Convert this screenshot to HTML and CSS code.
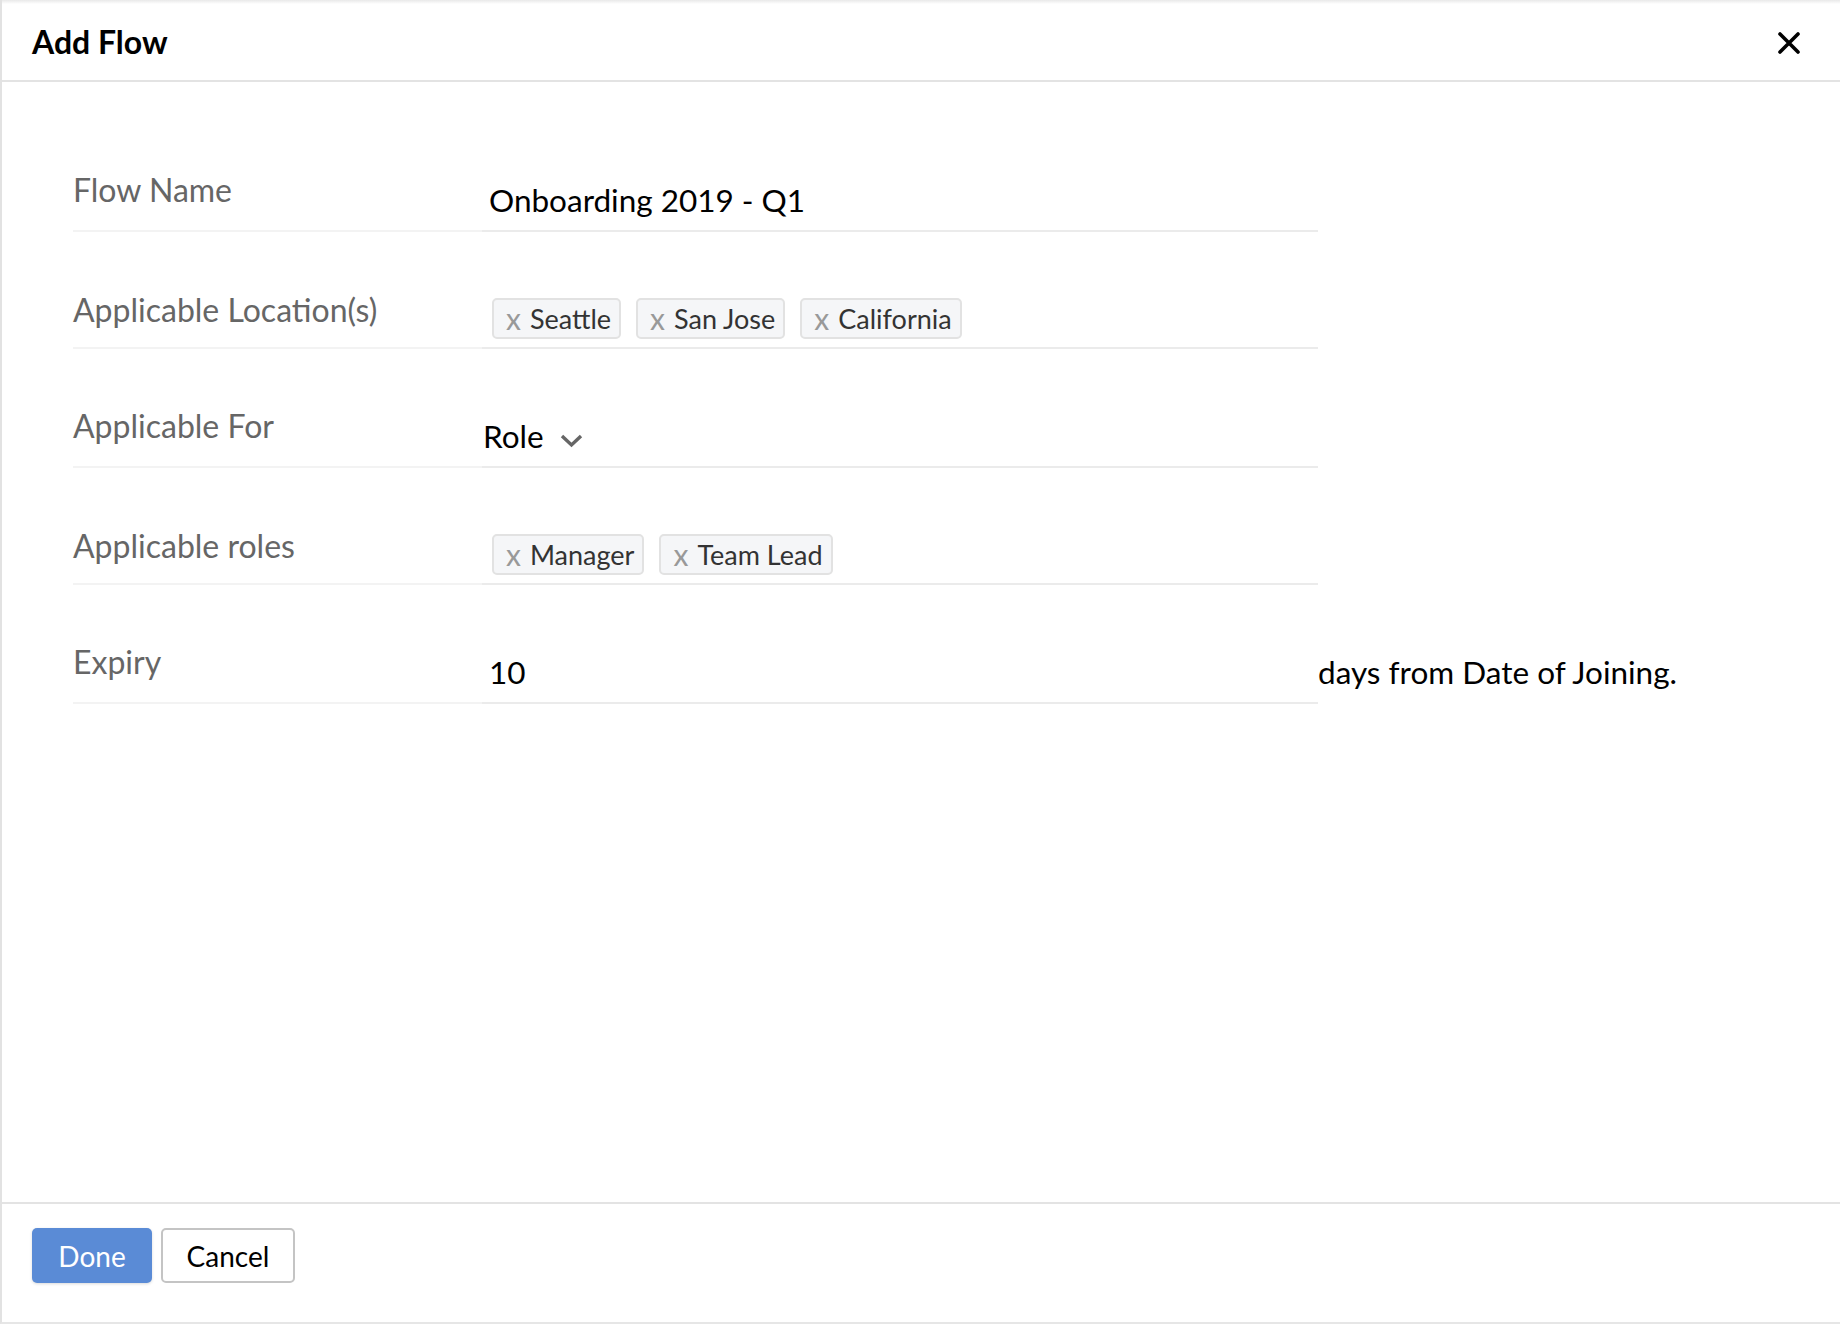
FILE: index.html
```html
<!DOCTYPE html>
<html lang="en">

<head>
    <meta charset="UTF-8" />
    <meta name="viewport" content="width=device-width, initial-scale=1.0" />
    <title>Add Flow</title>
    <link rel="stylesheet" href="styles.css">
</head>

<body>
    <div class="dialog">
        <div class="dialog-header">
            <h1 class="dialog-title">Add Flow</h1>
            <button class="close-btn" aria-label="Close">
                <svg width="22" height="22" viewBox="0 0 22 22">
                    <path d="M2 2 L20 20 M20 2 L2 20" stroke="#000" stroke-width="3.6" stroke-linecap="round" fill="none" />
                </svg>
            </button>
        </div>

        <div class="dialog-body">
            <div class="form-row">
                <div class="form-label">Flow Name</div>
                <div class="form-field field-text">Onboarding 2019 - Q1</div>
            </div>

            <div class="form-row row-chips">
                <div class="form-label">Applicable Location(s)</div>
                <div class="form-field field-chips">
                    <span class="chip"><span class="chip-x">x</span>Seattle</span>
                    <span class="chip"><span class="chip-x">x</span>San Jose</span>
                    <span class="chip"><span class="chip-x">x</span>California</span>
                </div>
            </div>

            <div class="form-row">
                <div class="form-label">Applicable For</div>
                <div class="form-field field-select">
                    <span>Role</span>
                    <svg class="chevron" width="23" height="15" viewBox="0 0 23 15">
                        <path d="M2 3 L11.5 12 L21 3" stroke="#666" stroke-width="3.4" fill="none" />
                    </svg>
                </div>
            </div>

            <div class="form-row row-chips">
                <div class="form-label">Applicable roles</div>
                <div class="form-field field-chips">
                    <span class="chip"><span class="chip-x">x</span>Manager</span>
                    <span class="chip"><span class="chip-x">x</span>Team Lead</span>
                </div>
            </div>

            <div class="form-row">
                <div class="form-label">Expiry</div>
                <div class="form-field field-text">10</div>
                <div class="field-suffix">days from Date of Joining.</div>
            </div>
        </div>

        <div class="dialog-footer">
            <button class="btn btn-primary">Done</button>
            <button class="btn btn-default">Cancel</button>
        </div>
    </div>
</body>

</html>
```

FILE: styles.css
```css
* {
    box-sizing: border-box;
}

html,
body {
    margin: 0;
    height: 100%;
}

body {
    font-family: Lato, "Open Sans", sans-serif;
    background: #fff;
    color: #000;
}

.dialog {
    height: 1324px;
    display: flex;
    flex-direction: column;
    border-left: 2px solid #e2e2e2;
    border-bottom: 2px solid #e6e6e6;
}

.dialog-header {
    height: 82px;
    display: flex;
    justify-content: space-between;
    align-items: center;
    padding: 4px 40px 0 30px;
    border-bottom: 2px solid #e3e3e3;
    background: linear-gradient(#e9e9e9, #fff 4px);
}

.dialog-title {
    margin: 0;
    font-size: 32px;
    line-height: 38px;
    font-weight: 700;
}

.close-btn {
    border: none;
    background: none;
    padding: 0;
    display: flex;
    margin-top: 2px;
}

.dialog-body {
    flex: 1;
    padding: 31px 0 0 71px;
}

.form-row {
    height: 119px;
    display: flex;
    align-items: flex-end;
}

.form-row.row-chips {
    height: 117px;
}

.form-label {
    width: 409px;
    font-size: 32px;
    line-height: 38px;
    color: #666;
    padding-bottom: 21px;
    border-bottom: 2px solid #f3f3f3;
}

.row-chips .form-label {
    padding-bottom: 18px;
}

.form-field {
    width: 836px;
    border-bottom: 2px solid #ebebeb;
}

.field-text {
    font-size: 31.5px;
    line-height: 38px;
    padding: 0 0 11px 7px;
}

.field-select {
    display: flex;
    align-items: center;
    font-size: 31.5px;
    line-height: 38px;
    padding: 0 0 11px 1px;
}

.chevron {
    margin-left: 16px;
    margin-top: 9px;
}

.field-chips {
    display: flex;
    gap: 15px;
    padding: 0 0 8px 10px;
}

.chip {
    display: inline-flex;
    align-items: center;
    height: 41px;
    padding: 0 8px 0 12px;
    border: 2px solid #e2e2e2;
    border-radius: 5px;
    background: #f5f6f8;
    font-size: 27px;
    color: #333;
}

.chip-x {
    color: #999;
    font-size: 30px;
    line-height: 1;
    margin-right: 9px;
    margin-top: -2px;
}

.field-suffix {
    font-size: 31.5px;
    line-height: 38px;
    padding-bottom: 13px;
}

.dialog-footer {
    height: 120px;
    display: flex;
    gap: 9px;
    padding: 24px 0 0 30px;
    border-top: 2px solid #e3e3e3;
}

.btn {
    height: 55px;
    font-family: Lato, sans-serif;
    font-size: 28px;
    border-radius: 5px;
    padding: 0;
    cursor: pointer;
}

.btn-primary {
    width: 120px;
    background: #5a8bd6;
    border: none;
    color: #fff;
    box-shadow: 0 1px 3px rgba(0, 0, 0, 0.15);
}

.btn-default {
    width: 134px;
    background: #fff;
    border: 2px solid #c4c4c4;
    color: #000;
}
```
